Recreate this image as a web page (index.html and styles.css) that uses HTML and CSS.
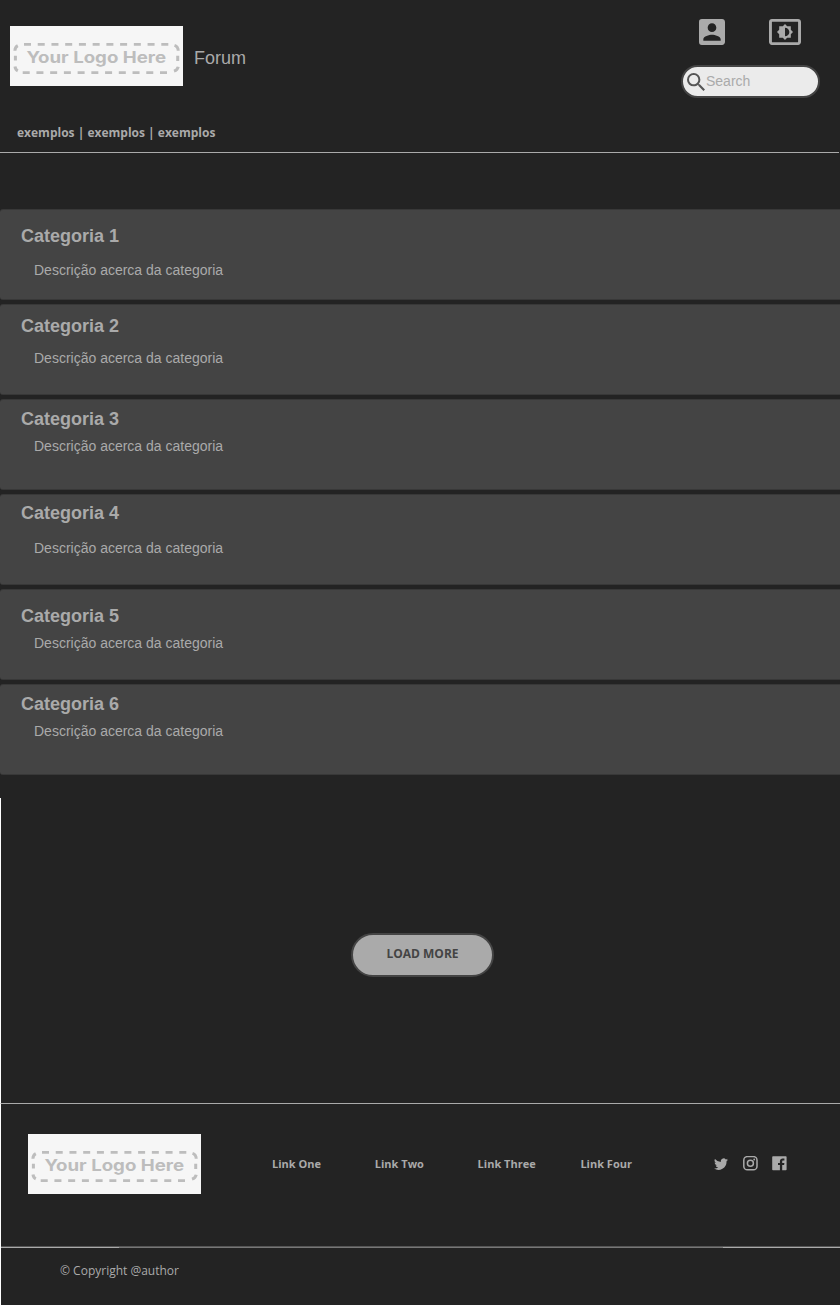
FILE: index.html
```html
<!DOCTYPE html>
<html lang="pt">
<head>
<meta charset="utf-8">
<title>Forum</title>
<link rel="stylesheet" href="styles.css">
</head>
<body>
<svg width="0" height="0" class="defs">
  <symbol id="logo" viewBox="0 0 173 60">
    <rect width="173" height="60" fill="#f6f6f6"/>
    <g fill="none" stroke="#bdbdbd" stroke-width="2.6">
      <path d="M14 18.400H159" stroke-dasharray="7 6.730"/>
      <path d="M12.700 46.600H158" stroke-dasharray="7 6.730"/>
      <path d="M4.900 24.800Q5 21 7.800 19.600M5.400 29.800V34.500M5 40.500Q5.300 43.500 7.800 44.800M164.500 19.400Q168.200 20.600 168.200 24.800M167.700 29.800V35M168.200 40.800Q167.600 44 164 45.200" stroke-width="3"/>
    </g>
    <text x="16.500" y="37.300" class="logo-text" textLength="139.500" lengthAdjust="spacingAndGlyphs">Your Logo Here</text>
  </symbol>
</svg>
<header class="header">
  <div class="brand">
    <svg class="logo"><use href="#logo"/></svg>
    <span class="brand-name">Forum</span>
  </div>
  <div class="tools">
    <div class="tool-icons">
      <svg width="26" height="26" viewBox="3 3 18 18"><path fill="#aaa" d="M3 5v14a2 2 0 0 0 2 2h14c1.1 0 2-.9 2-2V5c0-1.1-.9-2-2-2H5a2 2 0 0 0-2 2zm12 4c0 1.66-1.34 3-3 3s-3-1.34-3-3 1.34-3 3-3 3 1.34 3 3zm-9 8c0-2 4-3.1 6-3.1s6 1.1 6 3.1v1H6v-1z"/></svg>
      <svg width="32" height="26" viewBox="1 3 22 18" preserveAspectRatio="none"><path fill="#aaa" d="M21 3H3c-1.100 0-2 .9-2 2v14c0 1.100.9 2 2 2h18c1.100 0 2-.9 2-2V5c0-1.100-.9-2-2-2zm0 16.010H3V4.990h18v14.020zM8 16h2.500l1.500 1.500 1.500-1.500H16v-2.500l1.500-1.500-1.500-1.500V8h-2.500L12 6.500 10.500 8H8v2.500L6.500 12 8 13.500V16zm4-7c1.660 0 3 1.340 3 3s-1.340 3-3 3V9z"/></svg>
    </div>
    <label class="search">
      <svg width="18" height="18" viewBox="3 3 17.500 17.500"><path fill="#555" d="M15.500 14h-.79l-.28-.27A6.471 6.471 0 0 0 16 9.500 6.500 6.500 0 1 0 9.500 16c1.610 0 3.090-.59 4.230-1.570l.27.28v.79l5 4.990L20.490 19l-4.990-5zm-6 0C7.010 14 5 11.990 5 9.500S7.010 5 9.500 5 14 7.010 14 9.500 11.990 14 9.500 14z"/></svg>
      <span>Search</span>
    </label>
  </div>
  <nav class="crumbs">exemplos | exemplos | exemplos</nav>
</header>
<main>
  <section class="categories">
    <article class="card card-1"><h2>Categoria 1</h2><p>Descrição acerca da categoria</p></article>
    <article class="card card-2"><h2>Categoria 2</h2><p>Descrição acerca da categoria</p></article>
    <article class="card card-3"><h2>Categoria 3</h2><p>Descrição acerca da categoria</p></article>
    <article class="card card-4"><h2>Categoria 4</h2><p>Descrição acerca da categoria</p></article>
    <article class="card card-5"><h2>Categoria 5</h2><p>Descrição acerca da categoria</p></article>
    <article class="card card-6"><h2>Categoria 6</h2><p>Descrição acerca da categoria</p></article>
  </section>
  <div class="more"><button class="load">LOAD MORE</button></div>
</main>
<footer class="footer">
  <div class="footer-top">
    <svg class="logo"><use href="#logo"/></svg>
    <nav class="links"><a>Link One</a><a>Link Two</a><a>Link Three</a><a>Link Four</a></nav>
    <div class="social">
      <svg width="14" height="12" viewBox="0 1.500 24 20.500" preserveAspectRatio="none"><path fill="#aaa" d="M24 4.600a10 10 0 0 1-2.800.8 4.900 4.900 0 0 0 2.100-2.700 10 10 0 0 1-3.100 1.200 4.900 4.900 0 0 0-8.400 4.500A14 14 0 0 1 1.700 3.200a4.900 4.900 0 0 0 1.500 6.500 4.900 4.900 0 0 1-2.200-.6 4.900 4.900 0 0 0 3.900 4.900 5 5 0 0 1-2.200.1 4.900 4.900 0 0 0 4.600 3.400A9.900 9.900 0 0 1 0 19.500a14 14 0 0 0 21.500-12.400A10 10 0 0 0 24 4.600z"/></svg>
      <svg width="15" height="15" viewBox="0 0 15 15"><rect x=".8" y=".6" width="13.200" height="13.200" rx="3.600" fill="none" stroke="#aaa" stroke-width="1.500"/><circle cx="7.400" cy="7.200" r="3" fill="none" stroke="#aaa" stroke-width="1.500"/><circle cx="11.200" cy="3.500" r=".9" fill="#aaa"/></svg>
      <svg width="15" height="15" viewBox="0 0 15 15"><path fill="#aaa" d="M1 .3h12.800q.8 0 .8.800v12.400q0 .8-.8.800H10.200V9h1.900l.3-2.100h-2.200V5.500c0-.6.200-1 1-1h1.200V2.600c-.3 0-.9-.1-1.700-.1-1.700 0-2.800 1-2.800 2.900v1.500H6V9h1.900v5.300H1q-.8 0-.8-.8V1.100Q.2.300 1 .3z"/></svg>
    </div>
  </div>
  <div class="rule"><i></i><i class="dim"></i><i></i></div>
  <p class="copy">© Copyright @author</p>
</footer>
</body>
</html>
```

FILE: styles.css
```css
* { box-sizing: border-box; }
body { margin: 0; width: 840px; height: 1305px; background: #232323; color: #aaa; font-family: "Liberation Sans", Arial, sans-serif; }
h2, p { margin: 0; }
svg { display: block; flex: none; }
.defs { position: absolute; }
.logo { width: 173px; height: 60px; }
.logo-text { font: 700 16px Inter, sans-serif; fill: #bdbdbd; }

.header { width: 839px; height: 153px; border-bottom: 1px solid #aaa; display: grid; grid-template: 113px 39px / 1fr 158px; }
.brand { display: flex; align-items: flex-start; gap: 11px; padding: 26px 0 0 10px; }
.brand-name { font-size: 18px; line-height: 20px; margin-top: 22px; }
.tools { padding-top: 19px; }
.tool-icons { display: flex; gap: 44px; padding-left: 18px; }
.search { display: flex; align-items: center; gap: 1px; width: 139px; height: 33px; margin-top: 20px; padding: 0 0 0 4px; border: 2px solid #444; border-radius: 17px; background: #ebebeb; font-size: 14px; }
.search span { line-height: 16px; margin-top: -2px; }
.crumbs { padding: 11px 0 0 17px; font: 700 12px/17px "Open Sans", sans-serif; }

.categories { display: grid; gap: 4px; padding-top: 56px; }
.card { height: 91px; border: 1px solid #383838; border-width: 1px 0; border-radius: 3px 0 0 3px; background: #444; padding-left: 21px; }
.card h2 { font-size: 18px; line-height: 20px; }
.card p { font-size: 14px; line-height: 16px; padding-left: 13px; }
.card-1 { padding-top: 16px; }
.card-1 p { margin-top: 16px; }
.card-2 { padding-top: 11px; }
.card-2 p { margin-top: 14px; }
.card-3 { padding-top: 9px; }
.card-3 p { margin-top: 9px; }
.card-4 { padding-top: 8px; }
.card-4 p { margin-top: 17px; }
.card-5 { padding-top: 16px; }
.card-5 p { margin-top: 9px; }
.card-6 { padding-top: 9px; }
.card-6 p { margin-top: 9px; }

.more { height: 305px; margin-top: 23px; padding: 135px 0 0 350px; border-left: 1px solid #fff; }
.load { display: block; width: 143px; height: 44px; padding: 0 0 3px; border: 2px solid #444; border-radius: 22px; background: #aaa; color: #444; font: 700 12px/17px "Open Sans", sans-serif; }

.footer { height: 202px; border-left: 1px solid #fff; border-top: 1px solid #aaa; }
.footer-top { display: flex; height: 142px; padding: 30px 0 0 27px; }
.links { display: grid; grid-template-columns: repeat(4, 102.8px); margin-left: 71px; padding-top: 22px; width: 411px; font: 700 11px/16px "Open Sans", sans-serif; }
.social { display: flex; align-items: center; gap: 14.5px; height: 15px; margin: 22px 0 0 31px; }
.rule { display: flex; height: 2px; }
.rule i { width: 118px; border-top: 1px solid #555; background: #aaa; }
.rule .dim { width: 604px; flex: none; background: #777; }
.copy { padding: 14px 0 0 59px; font: 12px/17px "Open Sans", sans-serif; }
```
